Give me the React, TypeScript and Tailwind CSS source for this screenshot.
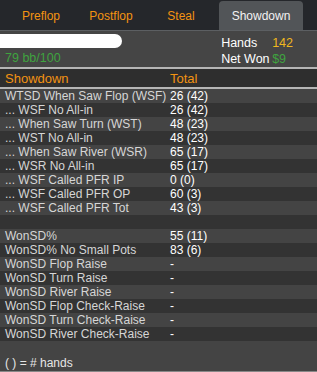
const rows: [string, string][] = [
  ['WTSD When Saw Flop (WSF)', '26 (42)'],
  ['... WSF No All-in', '26 (42)'],
  ['... When Saw Turn (WST)', '48 (23)'],
  ['... WST No All-in', '48 (23)'],
  ['... When Saw River (WSR)', '65 (17)'],
  ['... WSR No All-in', '65 (17)'],
  ['... WSF Called PFR IP', '0 (0)'],
  ['... WSF Called PFR OP', '60 (3)'],
  ['... WSF Called PFR Tot', '43 (3)'],
  ['', ''],
  ['WonSD%', '55 (11)'],
  ['WonSD% No Small Pots', '83 (6)'],
  ['WonSD Flop Raise', '-'],
  ['WonSD Turn Raise', '-'],
  ['WonSD River Raise', '-'],
  ['WonSD Flop Check-Raise', '-'],
  ['WonSD Turn Check-Raise', '-'],
  ['WonSD River Check-Raise', '-'],
]

const tabs = ['Preflop', 'Postflop', 'Steal', 'Showdown']

export default function App() {
  return (
    <div
      className="w-[317px] h-[372px] bg-[#444444] overflow-hidden flex flex-col text-[12px] leading-none"
      style={{ fontFamily: '"Liberation Sans", Arial, sans-serif' }}
    >
      {/* tabs */}
      <div className="h-[31px] bg-[#25272b] flex items-end pl-[6px] border-b border-[#5c5f62]">
        {tabs.map((t) => {
          const active = t === 'Showdown'
          return (
            <div
              key={t}
              className={
                active
                  ? 'w-[84px] h-[29px] ml-[3px] rounded-t-[4px] bg-[#525558] text-[#f2f2f2] flex items-center justify-center text-[12px]'
                  : 'w-[70px] h-[29px] text-[#f39312] flex items-center justify-center text-[12px]'
              }
            >
              {t}
            </div>
          )
        })}
      </div>

      {/* player header */}
      <div className="h-[36px] bg-[#454545] flex justify-between pl-[5px] pr-[4px]">
        <div className="flex flex-col">
          <div className="mt-[3px] -ml-[5px] w-[122px] h-[14px] bg-white rounded-r-full rounded-l-[3px]" />
          <div className="mt-[4px] text-[#3fa33f] text-[12.5px]">79 bb/100</div>
        </div>
        <div className="mr-[20px] mt-[6px] grid grid-cols-[51px_auto] gap-y-[1px] text-white text-[12.5px]">
          <span>Hands</span>
          <span className="text-[#f0b81e]">142</span>
          <span>Net Won</span>
          <span className="text-[#3fa33f]">$9</span>
        </div>
      </div>

      {/* table */}
      <div className="border-t-[2px] border-[#b5b5b5] bg-[#2e2e2e] h-[20px] flex items-center text-[#f39312] text-[13px]">
        <span className="w-[170px] pl-[5px]">Showdown</span>
        <span>Total</span>
      </div>
      <div className="border-t-[2px] border-[#b5b5b5]">
        {rows.map(([label, value], i) => (
          <div
            key={i}
            className={`h-[14px] flex items-center ${i % 2 === 0 ? 'bg-[#444444]' : 'bg-[#333333]'}`}
          >
            <span className="w-[170px] pl-[5px] text-[#d6d6d6] whitespace-nowrap">{label}</span>
            <span className="text-white">{value}</span>
          </div>
        ))}
      </div>
      <div className="flex-1 bg-[#444444] pl-[5px] pt-[16px] text-[#e6e6e6] border-b border-[#888]">
        ( ) = # hands
      </div>
    </div>
  )
}
